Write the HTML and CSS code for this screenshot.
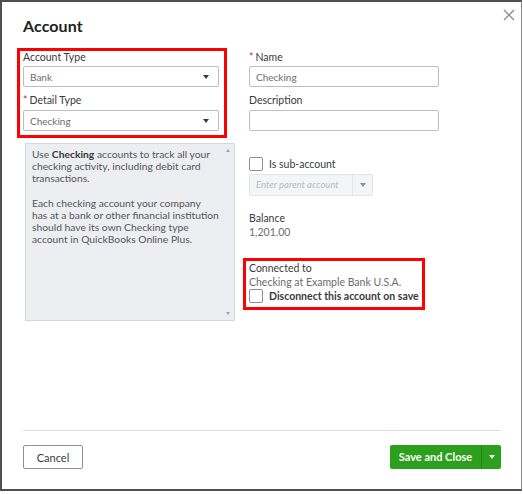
FILE: index.html
```html
<!DOCTYPE html>
<html lang="en">
<head>
    <meta charset="UTF-8">
    <meta name="viewport" content="width=device-width, initial-scale=1.0">
    <title>Account</title>
    <link rel="stylesheet" href="styles.css">
</head>
<body>
    <div class="modal">
        <div class="modal-head">
            <h2>Account</h2>
            <button class="close-btn" aria-label="Close">
                <svg width="12" height="12" viewBox="0 0 12 12"><path d="M1 1 L11 11 M11 1 L1 11" stroke="#8d9096" stroke-width="1.4" fill="none"/></svg>
            </button>
        </div>
        <div class="modal-body">
            <div class="col-left">
                <div class="highlight type-box">
                    <label class="field-label">Account Type</label>
                    <div class="select"><span>Bank</span><i class="caret"></i></div>
                    <label class="field-label"><span class="req">*</span>Detail Type</label>
                    <div class="select"><span>Checking</span><i class="caret"></i></div>
                </div>
                <div class="help-box">
                    <p>Use <b>Checking</b> accounts to track all your<br>checking activity, including debit card<br>transactions.</p>
                    <p>Each checking account your company<br>has at a bank or other financial institution<br>should have its own Checking type<br>account in QuickBooks Online Plus.</p>
                    <i class="scroll-up"></i>
                    <i class="scroll-down"></i>
                </div>
            </div>
            <div class="col-right">
                <label class="field-label"><span class="req">*</span>Name</label>
                <div class="input">Checking</div>
                <label class="field-label">Description</label>
                <div class="input"></div>

                <div class="check-row sub-row">
                    <span class="checkbox"></span>
                    <span class="check-text">Is sub-account</span>
                </div>
                <div class="combo">
                    <span class="combo-text">Enter parent account</span>
                    <span class="combo-btn"><i class="caret light"></i></span>
                </div>

                <div class="balance">
                    <div class="field-label">Balance</div>
                    <div class="value">1,201.00</div>
                </div>

                <div class="highlight connect-box">
                    <div class="field-label">Connected to</div>
                    <div class="value">Checking at Example Bank U.S.A.</div>
                    <div class="check-row">
                        <span class="checkbox"></span>
                        <span class="check-text strong">Disconnect this account on save</span>
                    </div>
                </div>
            </div>
        </div>
        <div class="modal-foot">
            <button class="btn-cancel">Cancel</button>
            <div class="btn-save">
                <span class="save-label">Save and Close</span>
                <span class="save-more"><i class="caret white"></i></span>
            </div>
        </div>
    </div>
</body>
</html>
```

FILE: styles.css
```css
*{
    box-sizing: border-box;
    margin: 0;
    padding: 0;
}
body{
    background: #fff;
    font-family: Lato, "Open Sans", Arial, sans-serif;
    color: #393a3d;
}
.modal{
    width: 522px;
    height: 491px;
    border-top: 2px solid #4f4f4f;
    border-left: 2px solid #4f4f4f;
    border-bottom: 2px solid #4f4f4f;
    border-right: 1px solid #8a8a8a;
    background: #fff;
    display: flex;
    flex-direction: column;
    padding: 0 20px 0 21px;
}
.modal-head{
    height: 46px;
    display: flex;
    justify-content: space-between;
    align-items: flex-start;
}
.modal-head h2{
    font-size: 16px;
    line-height: 20px;
    font-weight: 700;
    color: #222;
    margin-top: 14px;
    letter-spacing: 0.1px;
}
.close-btn{
    border: none;
    background: transparent;
    margin-top: 7px;
    margin-right: -14px;
}

.modal-body{
    display: flex;
    gap: 14px;
    height: 382px;
}
.col-left{
    width: 218px;
    margin-left: -6px;
}
.col-right{
    width: 190px;
}

.highlight{
    border: 3px solid #f00;
}
.type-box{
    width: 210px;
    padding: 0 5px 4px 3px;
}
.field-label{
    display: block;
    font-size: 10.5px;
    line-height: 13px;
    color: #393a3d;
    margin-bottom: 2px;
}
.req{
    color: #d52b1e;
    margin-right: 2px;
}
.select, .input{
    height: 21px;
    border: 1px solid #babec5;
    border-radius: 2px;
    font-size: 10px;
    color: #6b6c72;
    display: flex;
    align-items: center;
    justify-content: space-between;
    padding: 0 9px 0 6px;
    margin-bottom: 7px;
}
.select + .field-label,
.input + .field-label{
    margin-bottom: 3px;
}
.select{
    width: 196px;
}
.type-box .select:last-child{
    margin-bottom: 0;
}
.caret{
    width: 0;
    height: 0;
    border-left: 3.5px solid transparent;
    border-right: 3.5px solid transparent;
    border-top: 4px solid #393a3d;
}
.caret.light{
    border-top-color: #8d9096;
}
.caret.white{
    border-top-color: #fff;
}

.help-box{
    position: relative;
    margin: 5px 0 0 8px;
    width: 210px;
    height: 178px;
    background: #eceef1;
    border: 1px solid #d4d7dc;
    padding: 4px 8px 0 6px;
    font-size: 10.3px;
    line-height: 12px;
    color: #55565b;
    white-space: nowrap;
}
.help-box p{
    margin-bottom: 13px;
}
.help-box b{
    font-weight: 700;
    color: #393a3d;
}
.scroll-up, .scroll-down{
    position: absolute;
    right: 4px;
    width: 0;
    height: 0;
    border-left: 2.5px solid transparent;
    border-right: 2.5px solid transparent;
}
.scroll-up{
    top: 5px;
    border-bottom: 3px solid #a0a3a8;
}
.scroll-down{
    bottom: 5px;
    border-top: 3px solid #a0a3a8;
}

.col-right > .field-label:first-child{
    margin-top: 3px;
}
.input{
    width: 190px;
}

.check-row{
    display: flex;
    align-items: center;
    gap: 6px;
    height: 14px;
}
.sub-row{
    margin-top: 26px;
}
.checkbox{
    flex: none;
    width: 14px;
    height: 14px;
    border: 1px solid #8d9096;
    border-radius: 2px;
    background: #fff;
}
.check-text{
    font-size: 10.5px;
    color: #393a3d;
    white-space: nowrap;
}
.check-text.strong{
    font-weight: 700;
}

.combo{
    margin-top: 3px;
    width: 124px;
    height: 22px;
    background: #f4f5f8;
    border: 1px solid #e3e5e8;
    border-radius: 2px;
    display: flex;
}
.combo-text{
    flex: 1;
    font-size: 9.5px;
    font-style: italic;
    color: #b7b9bd;
    line-height: 20px;
    padding-left: 6px;
}
.combo-btn{
    width: 20px;
    border-left: 1px solid #e3e5e8;
    display: flex;
    align-items: center;
    justify-content: center;
}

.balance{
    margin-top: 16px;
}
.balance .field-label{
    margin-bottom: 1px;
}
.value{
    font-size: 10.5px;
    line-height: 13px;
    color: #6b6c72;
}

.connect-box{
    margin: 19px 0 0 -6px;
    width: 182px;
    height: 52px;
    padding: 1px 3px 0 3px;
}
.connect-box .field-label{
    margin-bottom: 1px;
}

.modal-foot{
    border-top: 1px solid #dcdee2;
    margin-right: -1px;
    padding-top: 14px;
    display: flex;
    justify-content: space-between;
    align-items: flex-start;
    width: 478px;
}
.btn-cancel{
    width: 60px;
    height: 24px;
    background: #fff;
    border: 1px solid #8d9096;
    border-radius: 2px;
    font-family: Lato, "Open Sans", Arial, sans-serif;
    font-size: 11px;
    color: #393a3d;
}
.btn-save{
    width: 111px;
    height: 24px;
    background: #2ca01c;
    border-radius: 2px;
    display: flex;
    color: #fff;
}
.save-label{
    flex: 1;
    font-size: 11px;
    font-weight: 700;
    line-height: 24px;
    text-align: center;
}
.save-more{
    width: 20px;
    border-left: 1px solid #238015;
    display: flex;
    align-items: center;
    justify-content: center;
}
```
